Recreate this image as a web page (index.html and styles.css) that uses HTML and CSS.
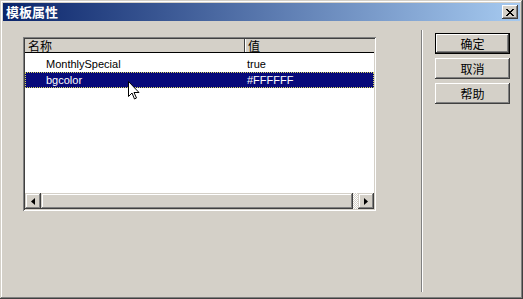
FILE: index.html
```html
<!DOCTYPE html>
<html lang="zh">

<head>
    <meta charset="UTF-8">
    <title>模板属性</title>
    <link rel="stylesheet" href="styles.css">
</head>

<body>
    <div class="window">
        <div class="titlebar">
            <span class="title">模板属性</span>
            <span class="close-btn">
                <svg width="8" height="7" viewBox="0 0 8 7">
                    <path d="M0 0h2v1h1v1h2v-1h1v-1h2v1h-1v1h-1v1h-1v1h1v1h1v1h1v1h-2v-1h-1v-1h-2v1h-1v1h-2v-1h1v-1h1v-1h1v-1h-1v-1h-1v-1h-1z" fill="#000"/>
                </svg>
            </span>
        </div>

        <div class="content">
            <div class="pane-left">
                <div class="listbox">
                    <div class="list-header">
                        <div class="hcell col-name">名称</div>
                        <div class="hcell col-value">值</div>
                    </div>
                    <div class="list-rows">
                        <div class="row">
                            <div class="cell col-name">MonthlySpecial</div>
                            <div class="cell col-value">true</div>
                        </div>
                        <div class="row selected">
                            <div class="cell col-name">bgcolor</div>
                            <div class="cell col-value">#FFFFFF</div>
                        </div>
                    </div>
                    <div class="hscroll">
                        <div class="sb-btn">
                            <svg width="4" height="7" viewBox="0 0 4 7"><path d="M4 0v7L0 3.5z" fill="#000"/></svg>
                        </div>
                        <div class="sb-thumb"></div>
                        <div class="sb-track"></div>
                        <div class="sb-btn">
                            <svg width="4" height="7" viewBox="0 0 4 7"><path d="M0 0v7l4-3.5z" fill="#000"/></svg>
                        </div>
                    </div>
                </div>
            </div>

            <div class="separator"></div>

            <div class="pane-right">
                <button class="btn default">确定</button>
                <button class="btn">取消</button>
                <button class="btn">帮助</button>
            </div>
        </div>

        <!-- mouse pointer over the selected row -->
        <svg class="cursor" width="12" height="20" viewBox="0 0 12 20">
            <path d="M0.5 0.5v15l3.5-3.5 2.5 6 2-1-2.5-5.5h5z" fill="#fff" stroke="#000" stroke-width="1"/>
        </svg>
    </div>
</body>

</html>
```

FILE: styles.css
```css
body {
    margin: 0;
    padding: 0;
    background: #d4d0c8;
    font-family: "Liberation Sans", "Noto Sans CJK SC", sans-serif;
    font-size: 11px;
}

.window {
    position: relative;
    width: 523px;
    height: 299px;
    box-sizing: border-box;
    padding: 3px;
    background: #d4d0c8;
    box-shadow: inset -1px -1px #404040, inset 1px 1px #d4d0c8, inset -2px -2px #808080, inset 2px 2px #fff;
}

.titlebar {
    height: 18px;
    display: flex;
    align-items: center;
    justify-content: space-between;
    background: linear-gradient(to right, #0a246a, #a6caf0);
    padding: 0 2px 0 3px;
}

.title {
    color: #fff;
    font-family: "Noto Sans CJK SC", sans-serif;
    font-weight: bold;
    font-size: 13px;
    line-height: 18px;
}

.close-btn {
    width: 16px;
    height: 14px;
    box-sizing: border-box;
    background: #d4d0c8;
    display: flex;
    align-items: center;
    justify-content: center;
    box-shadow: inset -1px -1px #404040, inset 1px 1px #fff, inset -2px -2px #808080;
}

.content {
    display: flex;
    align-items: flex-start;
}

.pane-left {
    padding: 16px 0 0 20px;
}

.listbox {
    width: 353px;
    height: 174px;
    box-sizing: border-box;
    padding: 2px;
    background: #fff;
    display: flex;
    flex-direction: column;
    box-shadow: inset 1px 1px #808080, inset -1px -1px #fff, inset 2px 2px #404040, inset -2px -2px #d4d0c8;
}

.list-header {
    display: flex;
    height: 13px;
    background: #d4d0c8;
    border-bottom: 1px solid #000;
    font-family: "Noto Sans CJK SC", sans-serif;
    font-size: 12px;
    line-height: 13px;
}

.hcell,
.cell {
    box-sizing: border-box;
}

.hcell {
    padding-left: 3px;
}

.hcell.col-name {
    border-right: 1px solid #404040;
    box-shadow: 1px 0 #fff;
}

.col-name {
    width: 220px;
    flex: none;
}

.col-value {
    flex: 1;
}

.list-rows {
    flex: 1;
    padding-top: 3px;
}

.row {
    display: flex;
    height: 16px;
    line-height: 16px;
    color: #000;
}

.row .col-name {
    padding-left: 21px;
}

.row .col-value {
    padding-left: 2px;
}

.row.selected {
    background: #080a7a;
    color: #fff;
    outline: 1px dotted #d8d860;
    outline-offset: -1px;
}

.hscroll {
    display: flex;
    height: 16px;
    background: #d4d0c8;
}

.sb-btn,
.sb-thumb {
    background: #d4d0c8;
    box-shadow: inset -1px -1px #404040, inset 1px 1px #d4d0c8, inset -2px -2px #808080, inset 2px 2px #fff;
}

.sb-btn {
    width: 16px;
    display: flex;
    align-items: center;
    justify-content: center;
}

.sb-thumb {
    width: 312px;
}

.sb-track {
    flex: 1;
    background: repeating-conic-gradient(#fff 0 25%, #d4d0c8 0 50%) 0 0 / 2px 2px;
}

.separator {
    margin: 9px 0 0 45px;
    width: 1px;
    height: 262px;
    background: #808080;
    border-right: 1px solid #fff;
}

.pane-right {
    display: flex;
    flex-direction: column;
    gap: 4px;
    padding: 12px 0 0 12px;
}

.btn {
    width: 75px;
    height: 21px;
    padding: 0;
    border: none;
    background: #d4d0c8;
    font-family: "Noto Sans CJK SC", sans-serif;
    font-size: 12px;
    color: #000;
    box-shadow: inset -1px -1px #404040, inset 1px 1px #fff, inset -2px -2px #808080;
}

.btn.default {
    box-shadow: inset 0 0 0 1px #000, inset -2px -2px #404040, inset 2px 2px #fff, inset -3px -3px #808080;
}

.cursor {
    position: absolute;
    left: 128px;
    top: 81px;
}
```
